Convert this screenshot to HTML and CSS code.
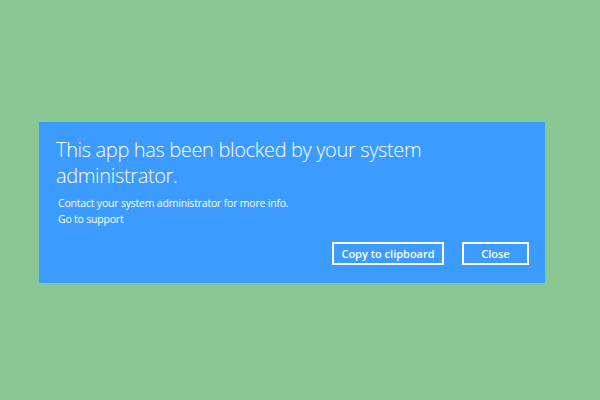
FILE: index.html
```html
<!DOCTYPE html>
<html lang="en">

<head>
    <meta charset="UTF-8">
    <meta name="viewport" content="width=device-width, initial-scale=1.0">
    <title>App blocked</title>
    <link rel="stylesheet" href="styles.css">
</head>

<body>
    <div class="dialog">
        <h1 class="title">This app has been blocked by your system administrator.</h1>
        <p class="info">Contact your system administrator for more info.</p>
        <a class="support" href="#">Go to support</a>
        <!--Buttons-->
        <div class="actions">
            <button class="btn btn-copy">Copy to clipboard</button>
            <button class="btn btn-close">Close</button>
        </div>
    </div>
</body>

</html>
```

FILE: styles.css
```css
* {
    margin: 0;
    padding: 0;
    box-sizing: border-box;
    font-family: 'Open Sans', 'Noto Sans', sans-serif;
}

body {
    width: 600px;
    height: 400px;
    background-color: #89c895;
    padding-top: 122px;
    padding-left: 39px;
}

.dialog {
    width: 506px;
    height: 161px;
    background: #3b9bff;
    color: white;
    display: flex;
    flex-direction: column;
    padding: 15px 16px 18px 17px;
}

.title {
    font-size: 20px;
    font-weight: 300;
    line-height: 26px;
    letter-spacing: -0.35px;
    width: 380px;
}

.info,
.support {
    font-size: 10.5px;
    line-height: 16px;
    letter-spacing: -0.2px;
    margin-left: 2px;
    color: white;
    text-decoration: none;
}

.info {
    margin-top: 6px;
}

.actions {
    margin-top: auto;
    display: flex;
    justify-content: flex-end;
    gap: 18px;
}

.btn {
    height: 23px;
    border: 2px solid white;
    background: transparent;
    color: white;
    font-size: 11px;
    font-weight: 600;
    cursor: pointer;
}

.btn-copy {
    width: 112px;
}

.btn-close {
    width: 67px;
}
```
